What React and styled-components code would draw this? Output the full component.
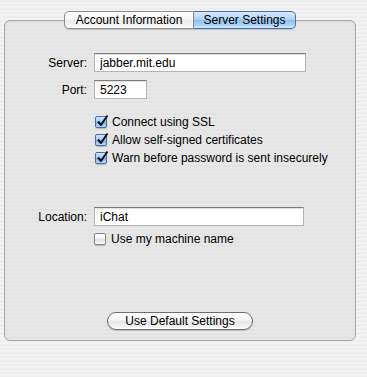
import React, { useState } from 'react';
import styled, { createGlobalStyle } from 'styled-components';

const GlobalStyle = createGlobalStyle`
  html, body {
    margin: 0;
    padding: 0;
  }
  body {
    font-family: 'Liberation Sans', Arial, sans-serif;
    font-size: 12px;
    color: #000;
  }
`;

const stripes = (a, b) =>
  `repeating-linear-gradient(to bottom, ${a} 0px, ${a} 2px, ${b} 2px, ${b} 4px)`;

const Page = styled.div`
  width: 367px;
  height: 377px;
  box-sizing: border-box;
  padding: 11px 11px 0 4px;
  background: ${stripes('#eeeeee', '#f3f3f3')};
  overflow: hidden;
`;

const TabBar = styled.div`
  position: relative;
  z-index: 1;
  display: flex;
  justify-content: center;
  height: 18px;
`;

const Tab = styled.button`
  height: 18px;
  box-sizing: border-box;
  padding: 0;
  white-space: nowrap;
  text-align: center;
  font-family: inherit;
  font-size: 12px;
  line-height: 16px;
  color: #000;
  cursor: pointer;
  border: 1px solid ${(p) => (p.$active ? '#4d6fa8' : '#8c8c8c')};
  border-left-width: ${(p) => (p.$first ? '1px' : '0')};
  border-radius: ${(p) => (p.$first ? '5px 0 0 5px' : '0 5px 5px 0')};
  width: ${(p) => p.$width}px;
  background: ${(p) =>
    p.$active
      ? 'linear-gradient(to bottom, #d6e9fb 0%, #b3d5f7 45%, #8ec0f0 52%, #a8d2f8 80%, #d2ecff 100%)'
      : 'linear-gradient(to bottom, #ffffff 0%, #f6f6f6 45%, #ececec 52%, #f4f4f4 85%, #ffffff 100%)'};
  box-shadow: 0 1px 1px rgba(0, 0, 0, 0.15);
`;

const Panel = styled.div`
  margin-top: -9px;
  height: 321px;
  box-sizing: border-box;
  border: 1px solid #a6a6a6;
  border-radius: 6px;
  background: ${stripes('#e3e3e3', '#e8e8e8')};
  box-shadow: inset 0 1px 1px rgba(0, 0, 0, 0.05);
  padding-top: 32px;
  display: flex;
  flex-direction: column;
`;

const Row = styled.div`
  display: flex;
  align-items: center;
  margin-top: ${(p) => p.$top || 0}px;
`;

const Label = styled.label`
  width: 82px;
  text-align: right;
  margin-right: 7px;
  flex-shrink: 0;
`;

const Field = styled.input`
  box-sizing: border-box;
  width: ${(p) => p.$width}px;
  height: 19px;
  padding: 1px 0 0 5px;
  font-family: inherit;
  font-size: 12px;
  color: #000;
  background: #fff;
  border: 1px solid #b4b4b4;
  border-top-color: #7c7c7c;
  box-shadow: inset 0 1px 0 rgba(0, 0, 0, 0.12);
  outline: none;
`;

const CheckList = styled.div`
  display: flex;
  flex-direction: column;
  margin-top: ${(p) => p.$top || 0}px;
  padding-left: ${(p) => p.$left}px;
`;

const CheckRow = styled.label`
  display: flex;
  align-items: center;
  height: 18px;
  cursor: pointer;
`;

const Box = styled.span`
  position: relative;
  width: 12px;
  height: 12px;
  box-sizing: border-box;
  border-radius: 2px;
  margin-right: 5px;
  border: 1px solid ${(p) => (p.$on ? '#4a6ea8' : '#888')};
  background: ${(p) =>
    p.$on
      ? 'linear-gradient(to bottom, #cfe5fb 0%, #9cc9f3 50%, #78b2ec 55%, #b8dcfb 100%)'
      : 'linear-gradient(to bottom, #ffffff 0%, #f0f0f0 50%, #e2e2e2 55%, #fafafa 100%)'};
  box-shadow: 0 1px 1px rgba(0, 0, 0, 0.2);
  flex-shrink: 0;

  svg {
    position: absolute;
    left: 0;
    top: -3px;
  }
`;

const Check = ({ on, onToggle, children }) => (
  <CheckRow onClick={onToggle}>
    <Box $on={on}>
      {on && (
        <svg width="13" height="13" viewBox="0 0 13 13">
          <path d="M2 7.5 L5 11 L11.5 1.5" fill="none" stroke="#111" strokeWidth="2" strokeLinejoin="round" />
        </svg>
      )}
    </Box>
    {children}
  </CheckRow>
);

const ButtonRow = styled.div`
  margin-top: auto;
  margin-bottom: 10px;
  display: flex;
  justify-content: center;
`;

const PillButton = styled.button`
  width: 146px;
  height: 18px;
  box-sizing: border-box;
  border-radius: 9px;
  border: 1px solid #6e6e6e;
  font-family: inherit;
  font-size: 12px;
  line-height: 16px;
  color: #000;
  padding: 0;
  cursor: pointer;
  background: linear-gradient(to bottom, #ffffff 0%, #f5f5f5 45%, #e6e6e6 52%, #f2f2f2 85%, #ffffff 100%);
  box-shadow: 0 1px 1px rgba(0, 0, 0, 0.2);
`;

export default function App() {
  const [tab, setTab] = useState('server');
  const [checks, setChecks] = useState({ ssl: true, self: true, warn: true, machine: false });
  const toggle = (k) => setChecks({ ...checks, [k]: !checks[k] });

  return (
    <Page>
      <GlobalStyle />
      <TabBar>
        <Tab $first $width={130} $active={tab === 'account'} onClick={() => setTab('account')}>
          Account Information
        </Tab>
        <Tab $width={102} $active={tab === 'server'} onClick={() => setTab('server')}>
          Server Settings
        </Tab>
      </TabBar>
      <Panel>
        <Row>
          <Label>Server:</Label>
          <Field $width={212} defaultValue="jabber.mit.edu" />
        </Row>
        <Row $top={8}>
          <Label>Port:</Label>
          <Field $width={53} defaultValue="5223" />
        </Row>
        <CheckList $top={14} $left={90}>
          <Check on={checks.ssl} onToggle={() => toggle('ssl')}>Connect using SSL</Check>
          <Check on={checks.self} onToggle={() => toggle('self')}>Allow self-signed certificates</Check>
          <Check on={checks.warn} onToggle={() => toggle('warn')}>Warn before password is sent insecurely</Check>
        </CheckList>
        <Row $top={40}>
          <Label>Location:</Label>
          <Field $width={210} defaultValue="iChat" />
        </Row>
        <CheckList $top={4} $left={89}>
          <Check on={checks.machine} onToggle={() => toggle('machine')}>Use my machine name</Check>
        </CheckList>
        <ButtonRow>
          <PillButton>Use Default Settings</PillButton>
        </ButtonRow>
      </Panel>
    </Page>
  );
}
